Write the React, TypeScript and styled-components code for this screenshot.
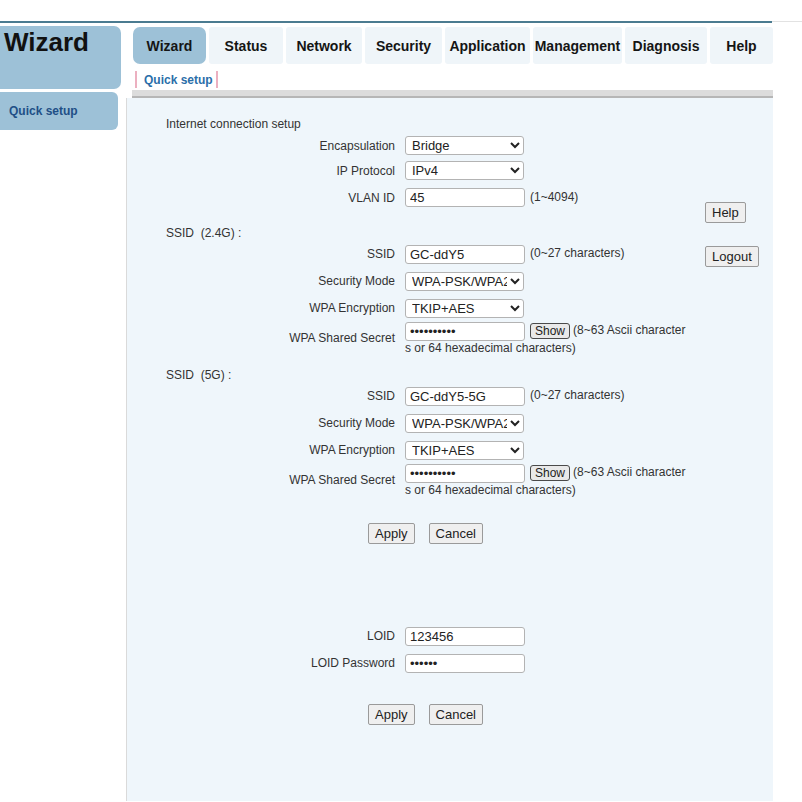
import React from "react";
import styled, { createGlobalStyle } from "styled-components";

const Global = createGlobalStyle`
  html, body { margin: 0; padding: 0; background: #ffffff; }
  body { font-family: "Liberation Sans", Arial, sans-serif; color: #333; }
  * { box-sizing: border-box; }
`;

const Page = styled.div`
  width: 802px;
  height: 802px;
  overflow: hidden;
  background: #fff;
`;

const TopStrip = styled.div`
  height: 22px;
  border-bottom: 1px solid #e2e2e2;
`;

const Frame = styled.div`
  width: 772px;
  margin-top: -1px;
  border-top: 2px solid #4b7b90;
  display: flex;
`;

const Sidebar = styled.div`
  width: 126px;
  flex: 0 0 126px;
  display: flex;
  flex-direction: column;
`;

const SideTitle = styled.div`
  width: 121px;
  height: 63px;
  margin-top: 3px;
  background: #9dc1d7;
  border-radius: 0 7px 7px 0;
  font-weight: bold;
  font-size: 26px;
  color: #111;
  padding: 2px 0 0 4px;
  line-height: 28px;
`;

const SideItem = styled.div`
  width: 118px;
  height: 38px;
  margin-top: 3px;
  background: #9dc1d7;
  border-radius: 0 6px 6px 0;
  font-weight: bold;
  font-size: 12px;
  color: #214f86;
  display: flex;
  align-items: center;
  padding-left: 9px;
`;

const Main = styled.div`
  flex: 1;
  display: flex;
  flex-direction: column;
`;

const TabBar = styled.div`
  display: flex;
  gap: 3px;
  padding: 4px 0 0 7px;
`;

const Tab = styled.div<{ $w: number; $active?: boolean }>`
  width: ${(p) => p.$w}px;
  height: 37px;
  background: ${(p) => (p.$active ? "#9dc1d7" : "#eff5f9")};
  border-radius: ${(p) => (p.$active ? "7px" : "3px")};
  display: flex;
  align-items: center;
  justify-content: center;
  font-weight: bold;
  font-size: 14px;
  color: #151515;
`;

const SubBar = styled.div`
  height: 26px;
  display: flex;
  align-items: center;
  padding: 5px 0 0 9px;
`;

const SubTab = styled.div`
  border-left: 2px solid #ecb0c0;
  border-right: 2px solid #ecb0c0;
  height: 17px;
  padding: 0 3px 0 7px;
  display: flex;
  align-items: center;
  font-weight: bold;
  font-size: 12px;
  color: #2b6ea9;
`;

const GreyRule = styled.div`
  margin-left: 6px;
  height: 8px;
  background: #dcdcdc;
  border-bottom: 2px solid #b6b6b6;
`;

const Body = styled.div`
  min-height: 703px;
  background: #eff6fb;
  border-left: 1px solid #dadada;
  display: flex;
`;

const FormCol = styled.div`
  width: 578px;
  padding-top: 16px;
  display: flex;
  flex-direction: column;
`;

const SideCol = styled.div`
  flex: 1;
  padding-top: 104px;
  display: flex;
  flex-direction: column;
  align-items: flex-start;
  gap: 23px;
`;

const Row = styled.div<{ $h: number; $mt?: number }>`
  height: ${(p) => p.$h}px;
  margin-top: ${(p) => p.$mt ?? 0}px;
  display: flex;
  align-items: center;
  font-size: 12px;
`;

const SectionTitle = styled(Row)`
  padding-left: 39px;
  color: #333;
`;

const Label = styled.div`
  flex: 0 0 268px;
  text-align: right;
  color: #333;
  font-size: 12px;
`;

const Control = styled.div`
  margin-left: 10px;
  display: flex;
  align-items: center;
`;

const StackControl = styled.div`
  margin-left: 10px;
  display: flex;
  flex-direction: column;
`;

const Line = styled.div`
  display: flex;
  align-items: center;
  height: 20px;
`;

const WrapLine = styled.div`
  font-size: 12px;
  line-height: 14px;
  color: #333;
`;

const TextInput = styled.input`
  width: 120px;
  height: 19px;
  border: 1px solid #b3b3b3;
  border-radius: 3px;
  background: #fff;
  padding: 0 4px;
  font-family: "Liberation Sans", Arial, sans-serif;
  font-size: 13px;
  color: #222;
  outline: none;
`;

const Select = styled.select`
  width: 119px;
  height: 19px;
  border: 1px solid #b3b3b3;
  border-radius: 3px;
  background: #fff;
  padding: 0 0 0 2px;
  font-family: "Liberation Sans", Arial, sans-serif;
  font-size: 13px;
  color: #222;
`;

const Hint = styled.span<{ $ml?: number }>`
  margin-left: ${(p) => p.$ml ?? 5}px;
  margin-top: -2px;
  font-size: 12px;
  color: #333;
  white-space: nowrap;
`;

const ShowButton = styled.button`
  margin-left: 5px;
  height: 16px;
  padding: 0 4px;
  border: 1px solid #4a4a4a;
  border-radius: 3px;
  background: #e9e9e9;
  font-family: "Liberation Sans", Arial, sans-serif;
  font-size: 12px;
  color: #222;
  line-height: 14px;
`;

const Button = styled.button`
  height: 21px;
  padding: 0 6px;
  border: 1px solid #9a9a9a;
  border-radius: 2px;
  background: #efefef;
  font-family: "Liberation Sans", Arial, sans-serif;
  font-size: 13px;
  color: #222;
`;

const ButtonRow = styled(Row)`
  padding-left: 241px;
  gap: 14px;
`;

const tabs: [string, number][] = [
  ["Wizard", 73],
  ["Status", 74],
  ["Network", 76],
  ["Security", 77],
  ["Application", 85],
  ["Management", 89],
  ["Diagnosis", 82],
  ["Help", 63],
];

function FieldRow({ h, mt, label, children }: { h: number; mt?: number; label: string; children: React.ReactNode }) {
  return (
    <Row $h={h} $mt={mt}>
      <Label>{label}</Label>
      <Control>{children}</Control>
    </Row>
  );
}

function SecretRow({ value }: { value: string }) {
  return (
    <Row $h={38}>
      <Label>WPA Shared Secret</Label>
      <StackControl>
        <Line>
          <TextInput type="password" defaultValue={value} />
          <ShowButton>Show</ShowButton>
          <Hint $ml={3}>(8~63 Ascii character</Hint>
        </Line>
        <WrapLine>s or 64 hexadecimal characters)</WrapLine>
      </StackControl>
    </Row>
  );
}

function WifiSection({ title, ssid, mt }: { title: string; ssid: string; mt: number }) {
  return (
    <>
      <SectionTitle $h={20} $mt={mt}>{title}</SectionTitle>
      <FieldRow h={22} label="SSID">
        <TextInput defaultValue={ssid} />
        <Hint>(0~27 characters)</Hint>
      </FieldRow>
      <FieldRow h={32} label="Security Mode">
        <Select defaultValue="wpa">
          <option value="wpa">WPA-PSK/WPA2-PSK</option>
        </Select>
      </FieldRow>
      <FieldRow h={22} label="WPA Encryption">
        <Select defaultValue="tkip">
          <option value="tkip">TKIP+AES</option>
        </Select>
      </FieldRow>
      <SecretRow value="1234567890" />
    </>
  );
}

export default function App() {
  return (
    <Page>
      <Global />
      <TopStrip />
      <Frame>
        <Sidebar>
          <SideTitle>Wizard</SideTitle>
          <SideItem>Quick setup</SideItem>
        </Sidebar>
        <Main>
          <TabBar>
            {tabs.map(([t, w], i) => (
              <Tab key={t} $w={w} $active={i === 0}>
                {t}
              </Tab>
            ))}
          </TabBar>
          <SubBar>
            <SubTab>Quick setup</SubTab>
          </SubBar>
          <GreyRule />
          <Body>
            <FormCol>
              <SectionTitle $h={20}>Internet connection setup</SectionTitle>
              <FieldRow h={23} label="Encapsulation">
                <Select defaultValue="bridge">
                  <option value="bridge">Bridge</option>
                </Select>
              </FieldRow>
              <FieldRow h={27} label="IP Protocol">
                <Select defaultValue="ipv4">
                  <option value="ipv4">IPv4</option>
                </Select>
              </FieldRow>
              <FieldRow h={27} label="VLAN ID">
                <TextInput defaultValue="45" />
                <Hint>(1~4094)</Hint>
              </FieldRow>
              <WifiSection title={"SSID\u00a0\u00a0(2.4G) :"} ssid="GC-ddY5" mt={12} />
              <WifiSection title={"SSID\u00a0\u00a0(5G) :"} ssid="GC-ddY5-5G" mt={8} />
              <ButtonRow $h={26} $mt={21}>
                <Button>Apply</Button>
                <Button>Cancel</Button>
              </ButtonRow>
              <FieldRow h={26} mt={77} label="LOID">
                <TextInput defaultValue="123456" />
              </FieldRow>
              <FieldRow h={28} label="LOID Password">
                <TextInput type="password" defaultValue="123456" />
              </FieldRow>
              <ButtonRow $h={26} $mt={24}>
                <Button>Apply</Button>
                <Button>Cancel</Button>
              </ButtonRow>
            </FormCol>
            <SideCol>
              <Button>Help</Button>
              <Button>Logout</Button>
            </SideCol>
          </Body>
        </Main>
      </Frame>
    </Page>
  );
}
